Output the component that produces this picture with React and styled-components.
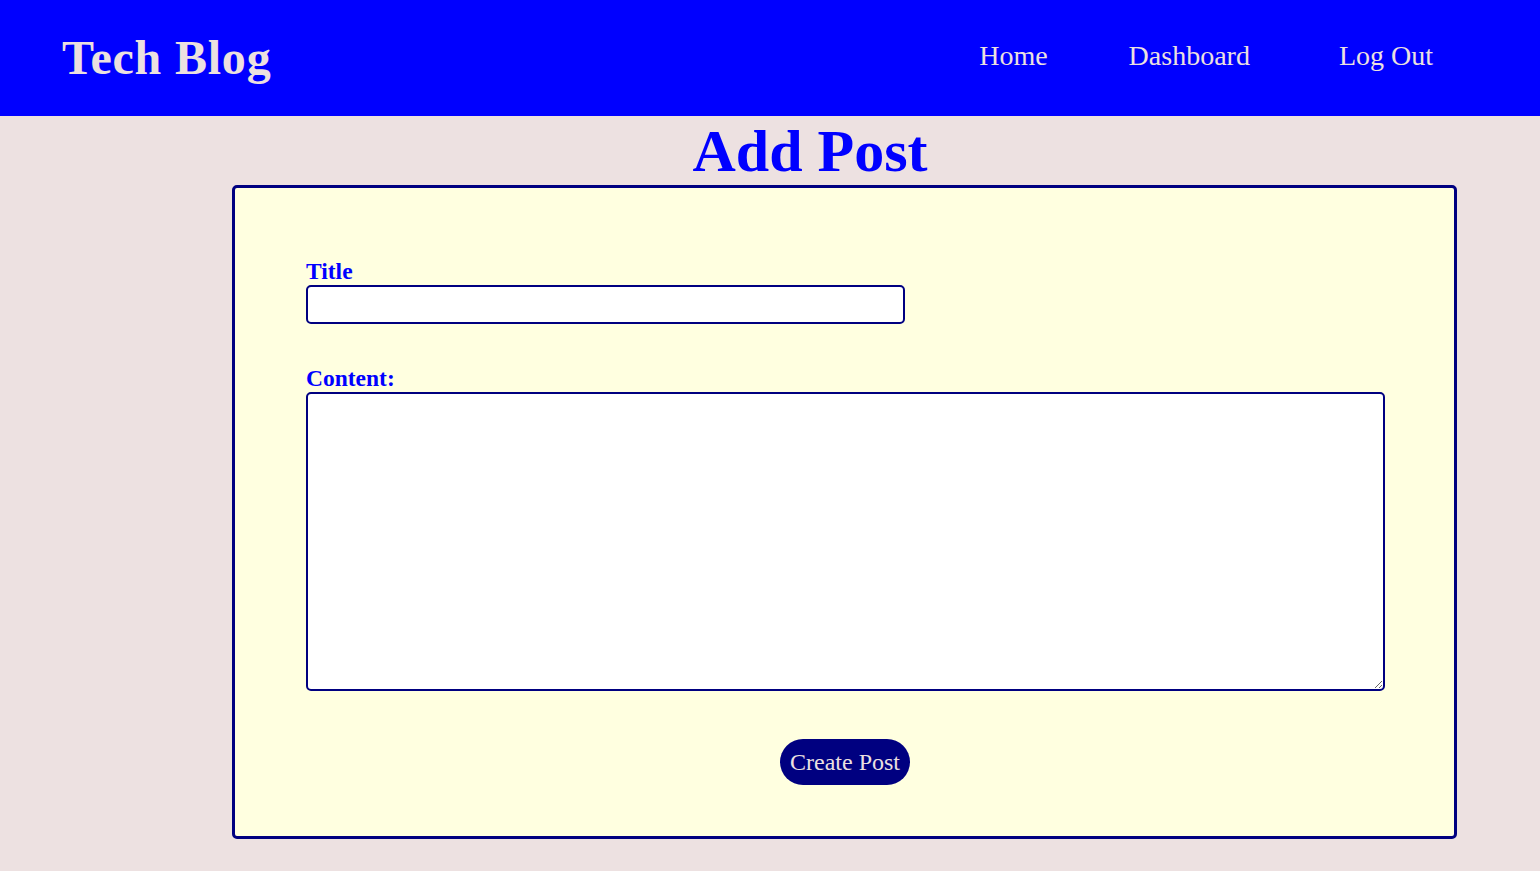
import React, { useState } from 'react';
import styled, { createGlobalStyle } from 'styled-components';

const GlobalStyle = createGlobalStyle`
    html, body {
        margin: 0;
        padding: 0;
        background-color: #ede1e1;
        font-family: "Liberation Serif", "Times New Roman", serif;
    }
    * {
        box-sizing: border-box;
    }
`

const Header = styled.header`
    display: flex;
    justify-content: space-between;
    align-items: center;
    height: 116px;
    padding: 0 107px 0 62px;
    background-color: #0000ff;
    color: #ece0e0;
`

const Logo = styled.h1`
    margin: 0;
    font-size: 48px;
    letter-spacing: 0.8px;
    font-weight: bold;
    line-height: 1;
`

const Nav = styled.nav`
    display: flex;
    align-items: center;
    gap: 81px;
    position: relative;
    top: -2px;
    a {
        color: #ece0e0;
        text-decoration: none;
        font-size: 28px;
        cursor: pointer;
    }
    a:last-child {
        margin-left: 8px;
    }
`

const Main = styled.main`
    display: flex;
    flex-direction: column;
    padding-bottom: 33px;
`

const PageTitle = styled.h2`
    margin: 5px 0 4px;
    padding-left: 80px;
    text-align: center;
    font-size: 60px;
    line-height: 60px;
    font-weight: bold;
    color: #0000ff;
`

const Card = styled.form`
    display: flex;
    flex-direction: column;
    margin: 0 83px 0 232px;
    padding: 70px 70px 51px 71px;
    background-color: #ffffe0;
    border: 3px solid #000080;
    border-radius: 5px;
`

const Field = styled.div`
    display: flex;
    flex-direction: column;
    align-items: flex-start;
    margin-bottom: ${props => props.gap}px;
`

const Label = styled.label`
    display: block;
    font-size: 23.5px;
    line-height: 27px;
    font-weight: bold;
    color: #0000ff;
`

const TextInput = styled.input`
    width: 599px;
    height: 39px;
    border: 2px solid #000080;
    border-radius: 5px;
    background: #fff;
    font-family: inherit;
    font-size: 18px;
    padding: 0 8px;
`

const TextArea = styled.textarea`
    width: 1079px;
    height: 299px;
    border: 2px solid #000080;
    border-radius: 5px;
    background: #fff;
    font-family: inherit;
    font-size: 18px;
    padding: 8px;
`

const SubmitBtn = styled.button`
    align-self: center;
    height: 46px;
    padding: 0 10px;
    border: none;
    border-radius: 23px;
    background-color: #000080;
    color: #ece0e0;
    font-family: inherit;
    font-size: 24px;
    cursor: pointer;
`

const App = () => {
    const [title, setTitle] = useState('');
    const [content, setContent] = useState('');

    const onSubmit = (event) => {
        event.preventDefault();
    }

    return (
        <>
            <GlobalStyle />
            <Header>
                <Logo>Tech Blog</Logo>
                <Nav>
                    <a>Home</a>
                    <a>Dashboard</a>
                    <a>Log Out</a>
                </Nav>
            </Header>
            <Main>
                <PageTitle>Add Post</PageTitle>
                <Card onSubmit={onSubmit}>
                    <Field gap={41}>
                        <Label htmlFor="title">Title</Label>
                        <TextInput id="title" value={title} onChange={e => setTitle(e.target.value)} />
                    </Field>
                    <Field gap={48}>
                        <Label htmlFor="content">Content:</Label>
                        <TextArea id="content" value={content} onChange={e => setContent(e.target.value)} />
                    </Field>
                    <SubmitBtn type="submit">Create Post</SubmitBtn>
                </Card>
            </Main>
        </>
    )
}

export default App;
